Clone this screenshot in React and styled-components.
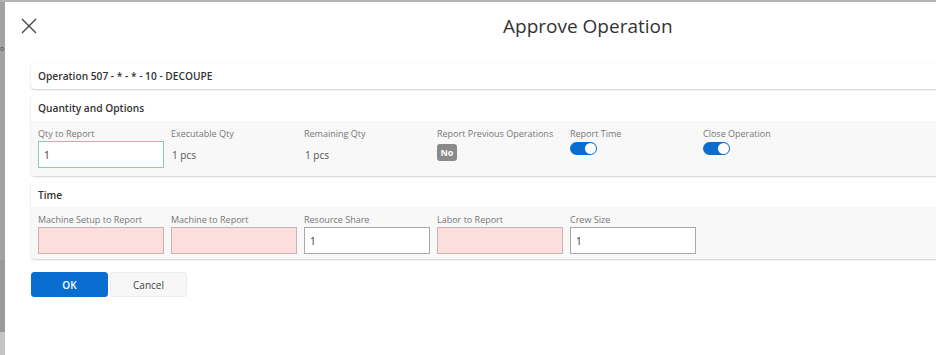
import React from "react";
import styled, { createGlobalStyle } from "styled-components";

const Global = createGlobalStyle`
  html, body { margin: 0; padding: 0; background: #fff; overflow: hidden; }
  body { font-family: "Open Sans", "Liberation Sans", sans-serif; color: #333; }
  * { box-sizing: border-box; }
`;

const Page = styled.div`
  display: flex;
  width: 936px;
  height: 355px;
  border-top: 2px solid #b4b4b4;
  overflow: hidden;
`;

const SideStrip = styled.div`
  width: 5px;
  flex: none;
  background: linear-gradient(#a3a3a3 0, #a3a3a3 258px, #9a9a9a 258px, #9a9a9a 330px, #c4c4c4 330px);
  font-size: 7px;
  line-height: 8px;
  color: #444;
  padding-top: 43px;
`;

const Main = styled.div`
  flex: 1;
  display: flex;
  flex-direction: column;
  padding: 0 0 0 26px;
  min-width: 0;
`;

const Header = styled.div`
  display: flex;
  align-items: center;
  height: 48px;
  margin-left: -11px;
  margin-bottom: 2px;
`;

const CloseBtn = styled.button`
  border: 0;
  background: none;
  padding: 0;
  width: 18px;
  height: 18px;
  display: flex;
  cursor: pointer;
`;

const Title = styled.h1`
  margin: 0 0 0 465px;
  font-size: 19px;
  font-weight: 400;
  color: #333;
`;

const Card = styled.section`
  width: 930px;
  background: #fff;
  border-radius: 4px;
  box-shadow: 0 1px 2px rgba(0, 0, 0, 0.18), 0 0 1px rgba(0, 0, 0, 0.08);
  margin-top: ${(p) => p.$mt || 6}px;
  overflow: hidden;
`;

const CardTitle = styled.div`
  height: ${(p) => p.$h || 26}px;
  display: flex;
  align-items: center;
  padding-left: 7px;
  font-size: 10.2px;
  font-weight: 600;
  color: #333;
`;

const CardBody = styled.div`
  background: #f8f8f8;
  padding: 6px 7px ${(p) => p.$pb || 5}px;
  display: grid;
  grid-template-columns: repeat(6, 126px);
  column-gap: 7px;
`;

const Field = styled.div`
  display: flex;
  flex-direction: column;
  min-width: 0;
`;

const Label = styled.label`
  font-size: 9px;
  color: #777;
  height: 14px;
  line-height: 13px;
  white-space: nowrap;
`;

const Input = styled.div`
  height: 27px;
  border: 1px solid ${(p) => (p.$state === "focus" ? "#7fd3aa" : p.$state === "error" ? "#c9b2b2" : "#a8a8a8")};
  background: ${(p) => (p.$state === "error" ? "#fcdedd" : "#fff")};
  font-size: 10px;
  color: #333;
  display: flex;
  align-items: center;
  padding-left: 5px;
`;

const Value = styled.div`
  height: 27px;
  font-size: 10px;
  color: #555;
  display: flex;
  align-items: center;
  padding-left: 1px;
`;

const Badge = styled.span`
  margin-top: 3px;
  width: 20px;
  height: 17px;
  border-radius: 3px;
  background: #8a8a8a;
  color: #fff;
  font-size: 9px;
  font-weight: 700;
  display: flex;
  align-items: center;
  justify-content: center;
`;

const Toggle = styled.span`
  margin-top: 1px;
  width: 27px;
  height: 13px;
  border-radius: 7px;
  background: #0a6ed1;
  position: relative;
  display: block;
  &::after {
    content: "";
    position: absolute;
    right: 1px;
    top: 1px;
    width: 11px;
    height: 11px;
    border-radius: 50%;
    background: #fff;
  }
`;

const Actions = styled.div`
  display: flex;
  gap: 2px;
  margin-top: 13px;
`;

const Button = styled.button`
  width: 77px;
  height: 25px;
  border-radius: 3px;
  font-family: inherit;
  font-size: 10px;
  font-weight: ${(p) => (p.$primary ? 600 : 400)};
  color: ${(p) => (p.$primary ? "#fff" : "#444")};
  background: ${(p) => (p.$primary ? "#0a6ed1" : "#f7f7f7")};
  border: 1px solid ${(p) => (p.$primary ? "#0a6ed1" : "#ececec")};
  cursor: pointer;
`;

export default function App() {
  return (
    <>
      <Global />
      <Page>
        <SideStrip>o</SideStrip>
        <Main>
          <Header>
            <CloseBtn aria-label="Close">
              <svg width="18" height="18" viewBox="0 0 18 18">
                <path d="M2 2 L16 16 M16 2 L2 16" stroke="#444" strokeWidth="1.4" fill="none" />
              </svg>
            </CloseBtn>
            <Title>Approve Operation</Title>
          </Header>

          <Card $mt={11}>
            <CardTitle>Operation 507 - * - * - 10 - DECOUPE</CardTitle>
          </Card>

          <Card>
            <CardTitle>Quantity and Options</CardTitle>
            <CardBody $pb={8}>
              <Field>
                <Label>Qty to Report</Label>
                <Input $state="focus">1</Input>
              </Field>
              <Field>
                <Label>Executable Qty</Label>
                <Value>1 pcs</Value>
              </Field>
              <Field>
                <Label>Remaining Qty</Label>
                <Value>1 pcs</Value>
              </Field>
              <Field>
                <Label>Report Previous Operations</Label>
                <Badge>No</Badge>
              </Field>
              <Field>
                <Label>Report Time</Label>
                <Toggle />
              </Field>
              <Field>
                <Label>Close Operation</Label>
                <Toggle />
              </Field>
            </CardBody>
          </Card>

          <Card>
            <CardTitle $h={25}>Time</CardTitle>
            <CardBody $pb={5}>
              <Field>
                <Label>Machine Setup to Report</Label>
                <Input $state="error" />
              </Field>
              <Field>
                <Label>Machine to Report</Label>
                <Input $state="error" />
              </Field>
              <Field>
                <Label>Resource Share</Label>
                <Input>1</Input>
              </Field>
              <Field>
                <Label>Labor to Report</Label>
                <Input $state="error" />
              </Field>
              <Field>
                <Label>Crew Size</Label>
                <Input>1</Input>
              </Field>
            </CardBody>
          </Card>

          <Actions>
            <Button $primary>OK</Button>
            <Button>Cancel</Button>
          </Actions>
        </Main>
      </Page>
    </>
  );
}
